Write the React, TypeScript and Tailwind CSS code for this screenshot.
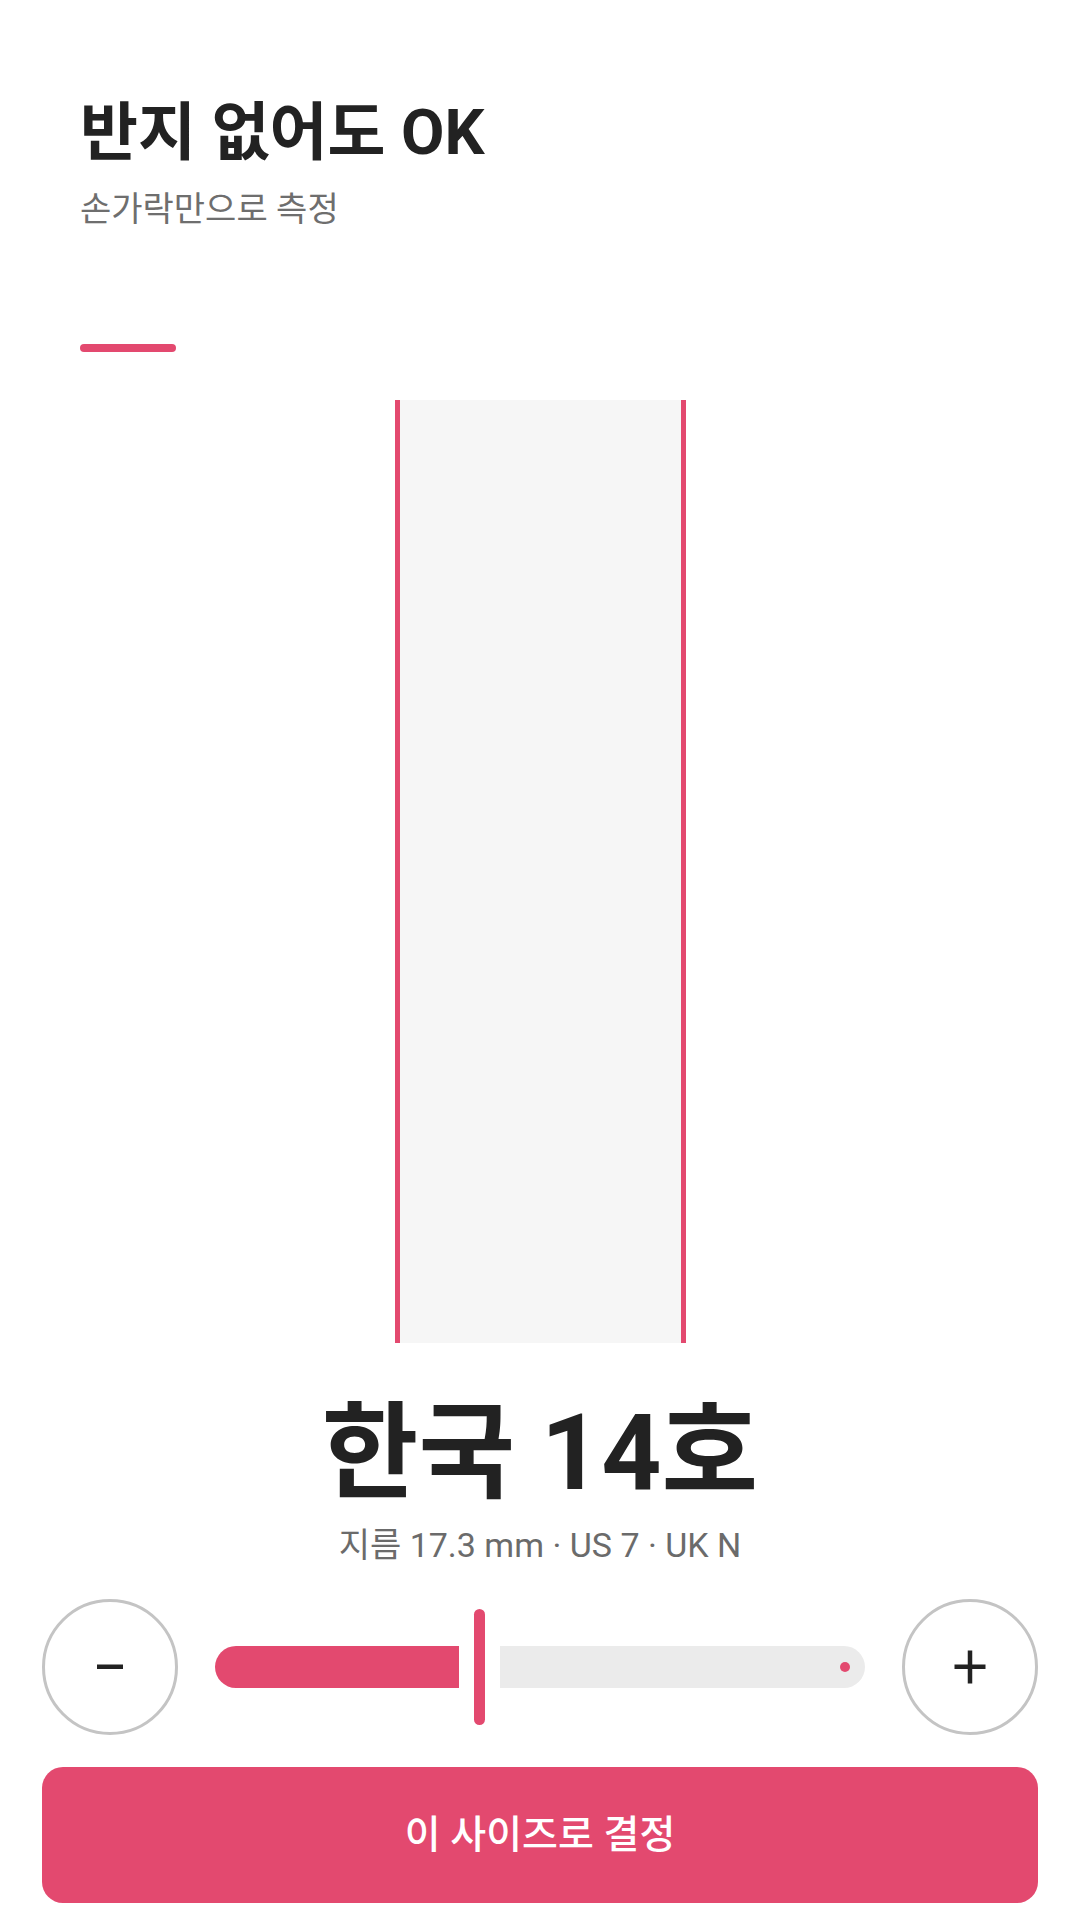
import React from 'react'

const PINK = 'bg-[#e3496f]'

function RoundButton({ kind }: { kind: 'minus' | 'plus' }) {
  return (
    <button
      type="button"
      aria-label={kind === 'minus' ? '작게' : '크게'}
      className="w-[136px] h-[136px] shrink-0 rounded-full border-[3px] border-[#c4c4c4] bg-white flex items-center justify-center"
    >
      {kind === 'minus' ? (
        <svg width="28" height="6" viewBox="0 0 28 6">
          <rect x="1" y="0.5" width="26" height="4.5" fill="#222222" />
        </svg>
      ) : (
        <svg width="32" height="34" viewBox="0 0 32 34">
          <rect x="0.5" y="14.5" width="31" height="4.5" fill="#222222" />
          <rect x="13.75" y="0.5" width="4.5" height="33" fill="#222222" />
        </svg>
      )}
    </button>
  )
}

function SizeSlider() {
  return (
    <div className="flex-1 flex items-center h-[136px]">
      {/* active track */}
      <div className={`w-[244px] h-[42px] rounded-l-full rounded-r-[5px] ${PINK}`} />
      {/* handle */}
      <div className="mx-[15px] w-[11px] h-[116px] rounded-full bg-[#e3496f]" />
      {/* inactive track + stop dot */}
      <div className="relative flex-1 h-[42px] rounded-l-[5px] rounded-r-full bg-[#ebebeb]">
        <span className="absolute right-[15px] top-1/2 -translate-y-1/2 w-[10px] h-[10px] rounded-full bg-[#e3496f]" />
      </div>
    </div>
  )
}

export default function App() {
  return (
    <div
      className="w-[1080px] h-[1920px] bg-white flex flex-col px-[42px] overflow-hidden"
      style={{ fontFamily: 'Roboto, "Noto Sans CJK KR", sans-serif' }}
    >
      <div className="pl-[38px] pt-[101px]">
        <h1 className="text-[63px] leading-none font-bold text-[#222222]">반지 없어도 OK</h1>
        <p className="mt-[28px] text-[34px] leading-none text-[#6e6e6e]">손가락만으로 측정</p>
        <div className="mt-[118px] w-[96px] h-[8px] rounded-full bg-[#e3496f]" />
      </div>

      {/* finger measuring strip */}
      <div className="mt-[48px] self-center w-[291px] h-[943px] bg-[#f6f6f6] border-x-[5px] border-[#e3496f]" />

      <div className="mt-[58px] text-center text-[105px] leading-none font-bold text-[#222222]">한국 14호</div>
      <div className="mt-[22px] text-center text-[34px] leading-none text-[#6b6b6b]">지름 17.3 mm · US 7 · UK N</div>

      <div className="mt-[37px] flex items-center gap-[37px]">
        <RoundButton kind="minus" />
        <SizeSlider />
        <RoundButton kind="plus" />
      </div>

      <button
        type="button"
        className="mt-[32px] h-[136px] w-full rounded-[21px] bg-[#e3496f] text-white text-[39px] font-medium"
      >
        이 사이즈로 결정
      </button>
    </div>
  )
}
